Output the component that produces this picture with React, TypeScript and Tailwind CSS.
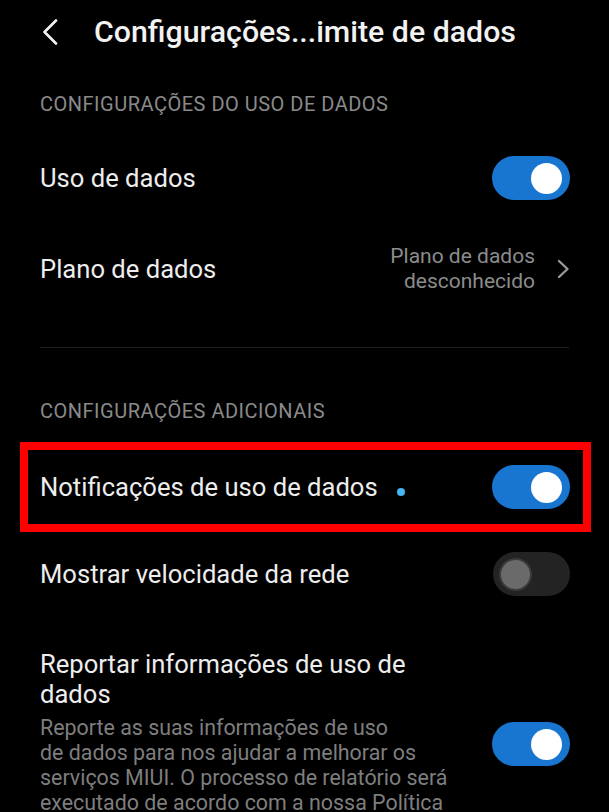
import React from "react";

function Toggle({ on }: { on: boolean }) {
  if (on) {
    return (
      <div className="flex h-[44px] w-[78px] shrink-0 items-center justify-end rounded-full bg-[#1875d0] pr-[8px]">
        <span className="h-[31px] w-[31px] rounded-full bg-white" />
      </div>
    );
  }
  return (
    <div className="flex h-[44px] w-[77px] shrink-0 items-center rounded-full bg-[#232323] pl-[6px]">
      <span className="h-[33px] w-[33px] rounded-full border-[2px] border-[#3a3a3a] bg-[#6a6a6a]" />
    </div>
  );
}

function SectionLabel({ children }: { children: React.ReactNode }) {
  return (
    <div className="text-[20px] leading-[24px] tracking-[0.5px] text-[#8a8a8a]">{children}</div>
  );
}

export default function App() {
  return (
    <div
      className="h-[812px] w-[609px] overflow-hidden bg-black text-[#ededed]"
      style={{ fontFamily: "Roboto, 'Noto Sans', sans-serif" }}
    >
      {/* top bar */}
      <div className="flex h-[64px] items-center pl-[42px]">
        <svg width="16" height="26" viewBox="0 0 16 26" fill="none">
          <path d="M14 1.5 L2.5 13 L14 24.5" stroke="#f2f2f2" strokeWidth="2.6" strokeLinecap="round" strokeLinejoin="round" />
        </svg>
        <h1 className="ml-[36px] text-[30.3px] font-medium leading-none text-[#f2f2f2]">
          Configurações...imite de dados
        </h1>
      </div>

      <div className="flex h-[80px] items-center px-[40px]">
        <SectionLabel>CONFIGURAÇÕES DO USO DE DADOS</SectionLabel>
      </div>

      <div className="flex h-[68px] items-center justify-between pl-[40px] pr-[39px]">
        <span className="text-[25.6px]">Uso de dados</span>
        <Toggle on />
      </div>

      <div className="flex h-[114px] items-center justify-between pl-[40px] pr-[39px]">
        <span className="text-[25.6px]">Plano de dados</span>
        <div className="flex items-center gap-[22px]">
          <div className="text-right text-[21px] leading-[25px] text-[#8c8c8c]">
            Plano de dados
            <br />
            desconhecido
          </div>
          <svg width="13" height="20" viewBox="0 0 13 20" fill="none">
            <path d="M2 2 L10.5 10 L2 18" stroke="#9a9a9a" strokeWidth="2.4" strokeLinecap="round" strokeLinejoin="round" />
          </svg>
        </div>
      </div>

      <div className="mx-[40px] mt-[21px] h-px bg-[#1f1f1f]" />

      <div className="mt-[51px] px-[40px]">
        <SectionLabel>CONFIGURAÇÕES ADICIONAIS</SectionLabel>
      </div>

      <div className="ml-[20px] mr-[18px] mt-[19px] flex h-[90px] items-center justify-between border-[8px] border-[#ff0000] pl-[12px] pr-[13px]">
        <div className="flex items-center">
          <span className="text-[25.6px]">Notificações de uso de dados</span>
          <span className="ml-[19px] mt-[10px] h-[8px] w-[8px] rounded-full bg-[#45b4f0]" />
        </div>
        <Toggle on />
      </div>

      <div className="flex h-[84px] items-center justify-between pl-[40px] pr-[39px]">
        <span className="text-[25.6px]">Mostrar velocidade da rede</span>
        <Toggle on={false} />
      </div>

      <div className="mt-[33px] flex justify-between pl-[40px] pr-[39px]">
        <div>
          <div className="text-[25.6px] leading-[30px]">
            Reportar informações de uso de
            <br />
            dados
          </div>
          <div className="mt-[6px] text-[21.4px] leading-[25px] text-[#7e7e7e]">
            Reporte as suas informações de uso
            <br />
            de dados para nos ajudar a melhorar os
            <br />
            serviços MIUI. O processo de relatório será
            <br />
            executado de acordo com a nossa Política
          </div>
        </div>
        <div className="mt-[73px]">
          <Toggle on />
        </div>
      </div>
    </div>
  );
}
